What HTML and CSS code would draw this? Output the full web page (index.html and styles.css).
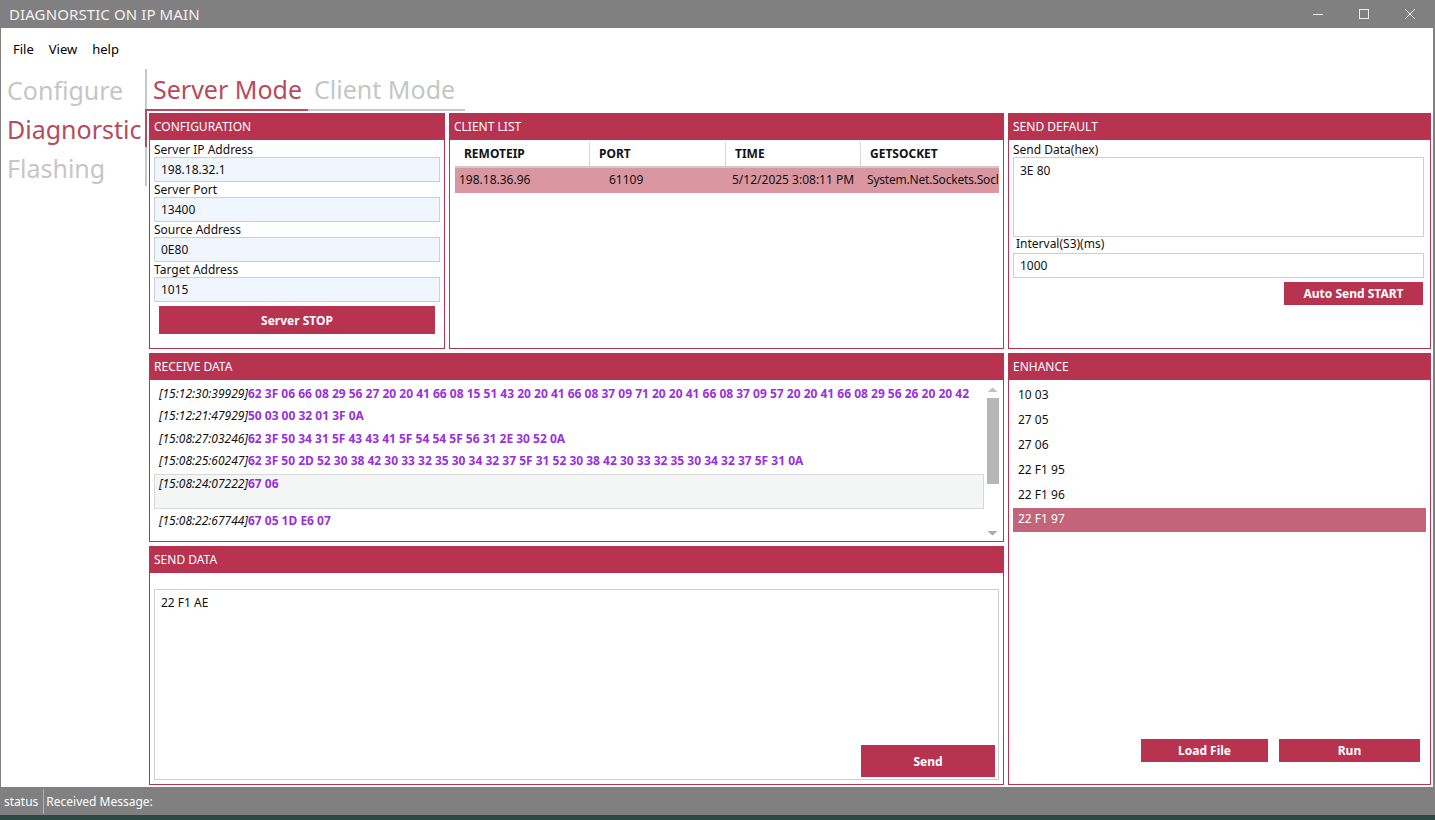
FILE: index.html
```html
<!DOCTYPE html>
<html>
<head>
<meta charset="utf-8">
<link rel="stylesheet" href="styles.css">
</head>
<body>
<div class="window">
  <div class="titlebar">
    <span class="title">DIAGNORSTIC ON IP MAIN</span>
    <div class="controls">
      <svg class="ctl" width="46" height="28" viewBox="0 0 46 28"><line x1="18" y1="14.5" x2="28" y2="14.5" stroke="#f4ecec" stroke-width="1"/></svg>
      <svg class="ctl" width="46" height="28" viewBox="0 0 46 28"><rect x="18.5" y="9.5" width="9" height="9" fill="none" stroke="#f4ecec" stroke-width="1"/></svg>
      <svg class="ctl" width="46" height="28" viewBox="0 0 46 28"><path d="M18 9 L28 19 M28 9 L18 19" stroke="#f4ecec" stroke-width="1"/></svg>
    </div>
  </div>
  <div class="menubar">
    <span class="menu">File</span>
    <span class="menu">View</span>
    <span class="menu">help</span>
  </div>
  <div class="main">
    <div class="sidebar">
      <div class="navlist">
        <div class="nav">Configure</div>
        <div class="nav active">Diagnorstic</div>
        <div class="nav">Flashing</div>
      </div>
    </div>
    <div class="content">
      <div class="tabs">
        <div class="tab active">Server Mode</div>
        <div class="tab">Client Mode</div>
      </div>
      <div class="grid">
        <section class="panel p-config">
          <div class="phead">CONFIGURATION</div>
          <div class="pbody config">
            <div class="field"><div class="lbl">Server IP Address</div><div class="input blue">198.18.32.1</div></div>
            <div class="field"><div class="lbl">Server Port</div><div class="input blue">13400</div></div>
            <div class="field"><div class="lbl">Source Address</div><div class="input blue">0E80</div></div>
            <div class="field"><div class="lbl">Target Address</div><div class="input blue">1015</div></div>
            <button class="btn btn-stop">Server STOP</button>
          </div>
        </section>
        <section class="panel p-client">
          <div class="phead">CLIENT LIST</div>
          <div class="pbody clients">
            <div class="trow thead">
              <div class="c c1">REMOTEIP</div>
              <div class="c c2">PORT</div>
              <div class="c c3">TIME</div>
              <div class="c c4">GETSOCKET</div>
            </div>
            <div class="trow tsel">
              <div class="c c1">198.18.36.96</div>
              <div class="c c2">61109</div>
              <div class="c c3">5/12/2025 3:08:11 PM</div>
              <div class="c c4">System.Net.Sockets.Socl</div>
            </div>
          </div>
        </section>
        <section class="panel p-default">
          <div class="phead">SEND DEFAULT</div>
          <div class="pbody sdef">
            <div class="lbl">Send Data(hex)</div>
            <div class="input area">3E 80</div>
            <div class="lbl ind">Interval(S3)(ms)</div>
            <div class="input">1000</div>
            <div class="brow"><button class="btn btn-auto">Auto Send START</button></div>
          </div>
        </section>
        <section class="panel p-recv">
          <div class="phead">RECEIVE DATA</div>
          <div class="pbody recv">
            <div class="rlist">
              <div class="ritem"><i>[15:12:30:39929]</i><b>62 3F 06 66 08 29 56 27 20 20 41 66 08 15 51 43 20 20 41 66 08 37 09 71 20 20 41 66 08 37 09 57 20 20 41 66 08 29 56 26 20 20 42</b></div>
              <div class="ritem"><i>[15:12:21:47929]</i><b>50 03 00 32 01 3F 0A</b></div>
              <div class="ritem"><i>[15:08:27:03246]</i><b>62 3F 50 34 31 5F 43 43 41 5F 54 54 5F 56 31 2E 30 52 0A</b></div>
              <div class="ritem"><i>[15:08:25:60247]</i><b>62 3F 50 2D 52 30 38 42 30 33 32 35 30 34 32 37 5F 31 52 30 38 42 30 33 32 35 30 34 32 37 5F 31 0A</b></div>
              <div class="ritem rsel"><i>[15:08:24:07222]</i><b>67 06</b></div>
              <div class="ritem"><i>[15:08:22:67744]</i><b>67 05 1D E6 07</b></div>
            </div>
            <div class="sbar">
              <svg class="arr" width="13" height="10" viewBox="0 0 13 10"><path d="M1.5 7 L6.5 2.5 L11.5 7 Z" fill="#c2c2c2"/></svg>
              <div class="thumb"></div>
              <div class="track"></div>
              <svg class="arr" width="13" height="10" viewBox="0 0 13 10"><path d="M1.5 3 L6.5 7.5 L11.5 3 Z" fill="#a9a9b4"/></svg>
            </div>
          </div>
        </section>
        <section class="panel p-enh">
          <div class="phead">ENHANCE</div>
          <div class="pbody enh">
            <div class="elist">
              <div class="eitem">10 03</div>
              <div class="eitem">27 05</div>
              <div class="eitem">27 06</div>
              <div class="eitem">22 F1 95</div>
              <div class="eitem">22 F1 96</div>
              <div class="eitem esel">22 F1 97</div>
            </div>
            <div class="ebtns">
              <button class="btn btn-load">Load File</button>
              <button class="btn btn-run">Run</button>
            </div>
          </div>
        </section>
        <section class="panel p-send">
          <div class="phead">SEND DATA</div>
          <div class="pbody sendb">
            <div class="sendwrap">
              <div class="input sarea">22 F1 AE</div>
              <button class="btn btn-send">Send</button>
            </div>
          </div>
        </section>
      </div>
    </div>
  </div>
  <div class="statusbar">
    <span class="st">status</span>
    <span class="sep"></span>
    <span class="st st2">Received Message:</span>
  </div>
</div>
<div class="desk"></div>
</body>
</html>
```
FILE: styles.css
```css
* { box-sizing: border-box; }
html, body { margin: 0; padding: 0; }
body {
  width: 1435px;
  height: 820px;
  overflow: hidden;
  background: #2e4844;
  font-family: "Noto Sans", "Open Sans", "Liberation Sans", sans-serif;
  font-size: 12px;
  color: #111;
}
.window {
  height: 815px;
  background: #fff;
  border-left: 1px solid #808080;
  border-right: 2px solid #808080;
  display: flex;
  flex-direction: column;
}
.titlebar {
  height: 28px;
  background: #808080;
  display: flex;
  align-items: center;
  justify-content: space-between;
  flex: none;
}
.title {
  color: #f6f0f0;
  font-size: 15px;
  padding-left: 8px;
  letter-spacing: 0.1px;
}
.controls { display: flex; }
.ctl { display: block; }
.menubar {
  height: 41px;
  display: flex;
  align-items: center;
  padding-left: 12px;
  gap: 15px;
  flex: none;
}
.menu { font-size: 13px; color: #000; }
.main {
  flex: 1;
  display: flex;
  min-height: 0;
}
.sidebar {
  width: 146px;
  flex: none;
}
.navlist {
  border-right: 2px solid #c8c8c8;
  height: 117px;
  position: relative;
  padding-top: 2px;
}
.nav {
  font-size: 25px;
  line-height: 39px;
  color: #c6c6c6;
  padding-left: 6px;
  white-space: nowrap;
}
.nav.active { color: #b84a5c; }
.navlist::after {
  content: "";
  position: absolute;
  right: -2px;
  top: 40px;
  height: 38px;
  width: 2px;
  background: #b84a5c;
}
.content {
  flex: 1;
  display: flex;
  flex-direction: column;
}
.tabs {
  display: flex;
  height: 42px;
  align-items: flex-end;
}
.tab {
  font-size: 25px;
  line-height: 37px;
  color: #c6c6c6;
  padding: 0 6px 1px 6px;
  border-bottom: 2px solid #c8c8c8;
}
.tab.active {
  color: #b84a5c;
  border-bottom-color: #b84a5c;
}
.tab + .tab { padding-right: 10px; }
.grid {
  margin-top: 2px;
  margin-left: 2px;
  display: grid;
  grid-template-columns: 296px 555px 423px;
  grid-template-rows: 236px 189px 239px;
  column-gap: 4px;
  row-gap: 4px;
}
.panel {
  border: 1px solid #b73350;
  display: flex;
  flex-direction: column;
  min-height: 0;
}
.p-recv { grid-column: 1 / 3; }
.p-enh { grid-column: 3; grid-row: 2 / 4; }
.p-send { grid-column: 1 / 3; }
.phead {
  height: 26px;
  background: #b73350;
  color: #fff;
  font-size: 12px;
  line-height: 26px;
  padding-left: 4px;
  flex: none;
}
.pbody { flex: 1; min-height: 0; position: relative; }
.lbl {
  height: 15px;
  line-height: 15px;
  font-size: 12px;
  color: #111;
}
.input {
  height: 25px;
  border: 1px solid #cfcfcf;
  line-height: 23px;
  padding-left: 6px;
  font-size: 12px;
  color: #111;
  background: #fff;
}
.input.blue { background: #f0f6fd; }
.btn {
  border: none;
  background: #b73350;
  color: #fff;
  font-family: inherit;
  font-weight: bold;
  font-size: 12px;
  padding: 0;
  cursor: default;
}
.config { padding: 2px 4px 0 4px; }
.btn-stop {
  display: block;
  width: 276px;
  height: 28px;
  margin: 4px 0 0 5px;
}
.clients { padding: 2px 4px 0 5px; }
.trow { display: flex; height: 25px; }
.thead {
  font-weight: bold;
  border-bottom: 2px solid #cccccc;
  height: 26px;
}
.c {
  white-space: nowrap;
  overflow: hidden;
  line-height: 24px;
}
.c1 { width: 135px; }
.c2 { width: 136px; }
.c3 { width: 135px; }
.c4 { width: 137px; }
.thead .c { border-right: 1px solid #d6d6d6; padding-left: 9px; }
.thead .c4 { border-right: none; }
.tsel { background: #da97a2; }
.tsel .c1 { padding-left: 4px; }
.tsel .c2 { padding-left: 19px; }
.tsel .c3 { padding-left: 6px; }
.tsel .c4 { padding-left: 6px; letter-spacing: -0.2px; }
.sdef { padding: 2px 6px 0 4px; }
.lbl.ind { padding-left: 3px; height: 16px; line-height: 14px; }
.input.area { height: 80px; line-height: 26px; }
.brow { display: flex; justify-content: flex-end; margin-top: 4px; padding-right: 1px; }
.btn-auto { width: 139px; height: 23px; }
.recv {
  display: flex;
  padding: 3px 4px 3px 4px;
}
.rlist { flex: 1; min-width: 0; }
.ritem {
  height: 22.4px;
  line-height: 22px;
  padding-left: 5px;
  white-space: nowrap;
  overflow: hidden;
  font-size: 12px;
}
.ritem i { font-style: italic; color: #111; }
.ritem b { color: #9a2fe0; font-weight: bold; }
.ritem.rsel {
  height: 35px;
  background: #f4f5f5;
  border: 1px solid #d8d8d8;
  line-height: 18px;
  padding-left: 4px;
  margin-top: 1px;
  margin-bottom: 1px;
}
.sbar {
  width: 13px;
  margin-left: 2px;
  display: flex;
  flex-direction: column;
  align-items: center;
  padding-top: 2px;
}
.arr { display: block; flex: none; }
.thumb { width: 12px; height: 86px; background: #b7b7b7; margin-top: 3px; }
.track { flex: 1; }
.enh {
  display: flex;
  flex-direction: column;
  padding: 2px 4px 0 4px;
}
.elist { flex: 1; }
.eitem {
  height: 25px;
  line-height: 25px;
  padding-left: 5px;
  color: #111;
}
.eitem.esel {
  background: #c4647a;
  color: #fff;
  height: 24px;
  line-height: 22px;
  margin-top: 1px;
}
.ebtns {
  display: flex;
  justify-content: flex-end;
  gap: 11px;
  padding-right: 6px;
  margin-bottom: 22px;
}
.btn-load { width: 127px; height: 23px; }
.btn-run { width: 141px; height: 23px; }
.sendb { padding: 16px 4px 4px 4px; }
.sendwrap { position: relative; height: 100%; }
.sarea { height: 100%; line-height: 26px; }
.btn-send {
  position: absolute;
  left: 707px;
  top: 156px;
  width: 134px;
  height: 32px;
}
.statusbar {
  margin-top: auto;
  height: 28px;
  background: #808080;
  display: flex;
  align-items: center;
  color: #fff;
  flex: none;
}
.st { font-size: 12px; padding: 0 4px 0 3px; }
.st2 { padding-left: 1px; }
.sep { width: 1px; height: 25px; background: #b0b0b0; margin: 0 1px; }
.desk { height: 5px; background: #2e4844; }
```
